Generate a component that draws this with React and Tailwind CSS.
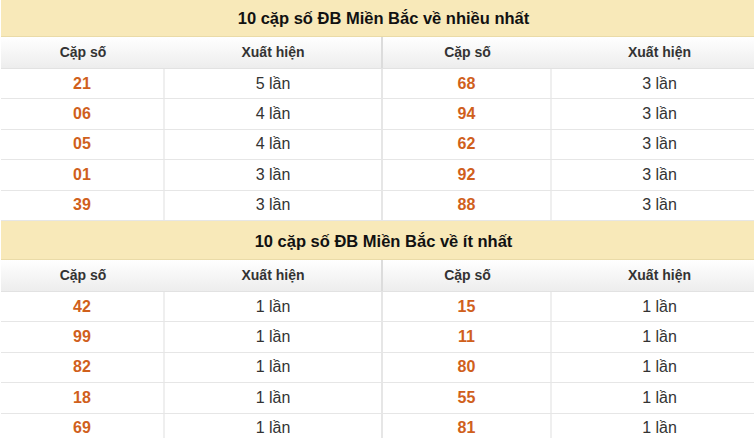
const top = [
  ['21', '5 lần', '68', '3 lần'],
  ['06', '4 lần', '94', '3 lần'],
  ['05', '4 lần', '62', '3 lần'],
  ['01', '3 lần', '92', '3 lần'],
  ['39', '3 lần', '88', '3 lần'],
];

const bottom = [
  ['42', '1 lần', '15', '1 lần'],
  ['99', '1 lần', '11', '1 lần'],
  ['82', '1 lần', '80', '1 lần'],
  ['18', '1 lần', '55', '1 lần'],
  ['69', '1 lần', '81', '1 lần'],
];

function Section({ title, rows, titleH }) {
  return (
    <div>
      <div className={`${titleH} bg-[#f8e9b9] flex items-center justify-center text-[16.5px] font-bold text-[#111] border-b border-[#eadba8]`}>
        {title}
      </div>
      <div className="grid grid-cols-[164px_218px_169px_215px] h-[32px] bg-gradient-to-b from-white to-[#ededed] text-[14px] font-semibold text-[#333] border-b border-[#e2e2e2]">
        <div className="flex items-center justify-center">Cặp số</div>
        <div className="flex items-center justify-center border-r-2 border-[#dcdcdc]">Xuất hiện</div>
        <div className="flex items-center justify-center">Cặp số</div>
        <div className="flex items-center justify-center">Xuất hiện</div>
      </div>
      {rows.map((r, i) => (
        <div key={i} className="grid grid-cols-[164px_218px_169px_215px] h-[30.4px] border-b border-[#e6e6e6] text-[16px] bg-white">
          <div className="flex items-center justify-center font-bold text-[#d0601c] border-r-2 border-[#efefef]">{r[0]}</div>
          <div className="flex items-center justify-center text-[#333] border-r-2 border-[#e6e6e6]">{r[1]}</div>
          <div className="flex items-center justify-center font-bold text-[#d0601c] border-r-2 border-[#efefef]">{r[2]}</div>
          <div className="flex items-center justify-center text-[#333]">{r[3]}</div>
        </div>
      ))}
    </div>
  );
}

export default function App() {
  return (
    <div className="w-[754px] h-[438px] overflow-hidden bg-white font-['Liberation_Sans',Arial,sans-serif]">
      <div className="w-[766px] pl-[1px]">
        <Section title="10 cặp số ĐB Miền Bắc về nhiều nhất" rows={top} titleH="h-[37px]" />
        <Section title="10 cặp số ĐB Miền Bắc về ít nhất" rows={bottom} titleH="h-[39px] pt-[2px]" />
      </div>
    </div>
  );
}
